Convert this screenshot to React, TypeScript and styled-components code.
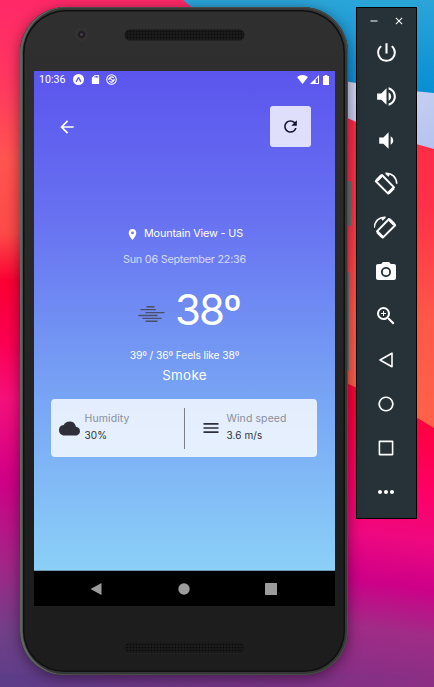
import React from 'react';
import styled, { createGlobalStyle } from 'styled-components';
import {
  MdArrowBack, MdRefresh, MdLocationOn, MdCloud, MdMenu, MdPowerSettingsNew, MdVolumeUp, MdVolumeDown,
  MdPhotoCamera, MdZoomIn, MdMoreHoriz, MdSdCard, MdRemove, MdClose,
} from 'react-icons/md';

const Global = createGlobalStyle`
  * { box-sizing: border-box; }
  body { margin: 0; overflow: hidden; font-family: Inter, "Open Sans", sans-serif; }
  svg { display: block; flex: none; }
`;

const Desktop = styled.main`
  position: relative;
  isolation: isolate;
  width: 434px;
  height: 687px;
  overflow: hidden;
  display: flex;
  align-items: flex-start;
  padding: 7px 0 0 20px;
`;

const WallpaperArt = styled.svg`
  position: absolute;
  inset: 0;
  z-index: -1;
`;

const Phone = styled.section`
  position: relative;
  width: 328px;
  height: 668px;
  padding: 0 13px 0 14px;
  display: flex;
  flex-direction: column;
  border-radius: 46px 46px 44px 44px;
  background: linear-gradient(#303030, #292929 35%, #1e1e1e 75%, #1d1d1d);
  box-shadow: inset 2.5px 0 0 0 #5f6562, inset -1px 0 0 0 #4a4c4b, inset 0 0 0 1px #484a49,
    inset 0 0 0 3px #363837, inset 0 0 0 4.5px #101010, 0 3px 14px rgba(20, 0, 20, 0.5);
`;

const SideKey = styled.i<{ $top: number; $h: number; $w: number }>`
  position: absolute;
  left: 328px;
  top: ${p => p.$top}px;
  width: ${p => p.$w}px;
  height: ${p => p.$h}px;
  border-radius: 0 1px 1px 0;
  background: #555b5b;
`;

const Bezel = styled.div<{ $h: number; $top: number }>`
  position: relative;
  height: ${p => p.$h}px;
  padding-top: ${p => p.$top}px;
  display: flex;
  justify-content: center;
  align-items: flex-start;
`;

const Grille = styled.div`
  width: 119px;
  height: 10px;
  border-radius: 5px;
  background: radial-gradient(circle, #0a0a0a 0.8px, transparent 1.1px) 1px 0 / 3px 3px, #1b1b1b;
  box-shadow: 0 0 0 0.5px #171717, 0 1px 0 #303030;
`;

const Camera = styled.i`
  position: absolute;
  left: 41px;
  top: 21px;
  width: 13px;
  height: 13px;
  border-radius: 50%;
  background: radial-gradient(circle, #443c49 0 1px, #1f1d21 2px 3px, #333 4.5px);
`;

const Screen = styled.div`
  height: 500px;
  display: flex;
  flex-direction: column;
  align-items: center;
  color: #fff;
  background: linear-gradient(#5b55ee, #6872f1 30%, #76a0f4 62%, #8bd0f8);
  border-bottom: 1px solid #7396ae;
`;

const StatusBar = styled.div`
  align-self: stretch;
  height: 17px;
  padding: 0 6px 0 5px;
  display: flex;
  align-items: center;
  font: 10.6px/17px Roboto, sans-serif;
  & > span { width: 34px; }
`;

const StatusIcons = styled.div<{ $gap: number; $push?: boolean }>`
  display: flex;
  align-items: center;
  gap: ${p => p.$gap}px;
  margin-left: ${p => (p.$push ? 'auto' : '0')};
  & > :last-child { margin-left: ${p => (p.$push ? '3px' : '0')}; }
`;

const Header = styled.header`
  align-self: stretch;
  display: flex;
  align-items: center;
  justify-content: space-between;
  margin: 18px 24px 0 23px;
`;

const RefreshButton = styled.button`
  width: 41px;
  height: 41px;
  padding: 0;
  border: 0;
  border-radius: 3px;
  display: grid;
  place-items: center;
  color: #15122b;
  background: rgba(255, 255, 255, 0.8);
`;

const Line = styled.div<{ $mt: number; $size: number; $lh: number; $track?: number; $fade?: number }>`
  display: flex;
  align-items: center;
  white-space: pre;
  margin-top: ${p => p.$mt}px;
  font-size: ${p => p.$size}px;
  line-height: ${p => p.$lh}px;
  letter-spacing: ${p => p.$track ?? 0}px;
  opacity: ${p => p.$fade ?? 1};
`;

const Place = styled(Line)`
  gap: 5px;
`;

const Temperature = styled.div`
  display: flex;
  align-items: center;
  gap: 10px;
  height: 40px;
  margin: 22px 0 0 9px;
  font-size: 42px;
  font-weight: 400;
  line-height: 40px;
  letter-spacing: -1.9px;
  & > svg { margin-top: 8px; }
`;

const Card = styled.section`
  width: 266px;
  height: 58px;
  margin: 15px 2px 0 0;
  display: grid;
  grid-template-columns: 133px 1px 132px;
  align-items: center;
  border-radius: 4px;
  background: rgba(255, 255, 255, 0.8);
  color: #2e2f38;
`;

const Metric = styled.div<{ $left: number; $gap: number }>`
  display: flex;
  align-items: center;
  gap: ${p => p.$gap}px;
  padding-left: ${p => p.$left}px;
`;

const MetricText = styled.dl`
  margin: -2px 0 0;
  font-size: 10.5px;
  line-height: 17px;
  letter-spacing: 0.1px;
  dt { color: #8b8e9b; }
  dd { margin: 0; font-size: 10px; }
`;

const Divider = styled.i`
  height: 41px;
  background: #7c808a;
`;

const NavBar = styled.nav`
  height: 35px;
  padding: 0 58px 0 56px;
  display: flex;
  align-items: center;
  justify-content: space-between;
  background: #000;
  color: #9c9c9c;
`;

const Toolbar = styled.aside`
  width: 61px;
  height: 512px;
  margin-left: 8px;
  padding-right: 1px;
  border: 1px solid #000;
  display: flex;
  flex-direction: column;
  align-items: center;
  color: #fff;
  background: #263238;
`;

const WindowControls = styled.div`
  height: 22px;
  padding-top: 4px;
  display: flex;
  align-items: center;
  gap: 13px;
`;

const Tool = styled.div`
  width: 44px;
  height: 44px;
  display: grid;
  place-items: center;
`;

const Tools = styled.div`
  display: flex;
  flex-direction: column;
`;

const Wallpaper = () => (
  <WallpaperArt width="434" height="687" viewBox="0 0 434 687" aria-hidden>
    <defs>
      <linearGradient id="left" x2="0" y2="1">
        <stop offset="0" stopColor="#ff2868" />
        <stop offset="0.12" stopColor="#ff3860" />
        <stop offset="0.23" stopColor="#ff5450" />
        <stop offset="0.34" stopColor="#fc4a48" />
        <stop offset="0.41" stopColor="#fb0034" />
        <stop offset="0.5" stopColor="#fb0052" />
        <stop offset="0.58" stopColor="#f5107a" />
        <stop offset="0.7" stopColor="#d00086" />
        <stop offset="0.82" stopColor="#a32588" />
        <stop offset="0.92" stopColor="#704088" />
        <stop offset="1" stopColor="#5c3d88" />
      </linearGradient>
      <linearGradient id="right" gradientUnits="userSpaceOnUse" x1="0" y1="120" x2="0" y2="687">
        <stop offset="0" stopColor="#ff2a48" />
        <stop offset="0.15" stopColor="#ff3048" />
        <stop offset="0.35" stopColor="#ff5848" />
        <stop offset="0.5" stopColor="#ff6048" />
      </linearGradient>
      <linearGradient id="lower" gradientUnits="userSpaceOnUse" x1="370" y1="400" x2="330" y2="687">
        <stop offset="0" stopColor="#ff0038" />
        <stop offset="0.28" stopColor="#ff0064" />
        <stop offset="0.46" stopColor="#ee0880" />
        <stop offset="0.62" stopColor="#cd0088" />
        <stop offset="0.78" stopColor="#a02c87" />
        <stop offset="1" stopColor="#803084" />
      </linearGradient>
      <linearGradient id="sky" x2="0" y2="1">
        <stop offset="0" stopColor="#2ba5d8" />
        <stop offset="1" stopColor="#078ed4" />
      </linearGradient>
      <linearGradient id="band" x2="1" y2="1">
        <stop offset="0" stopColor="#d9def5" />
        <stop offset="1" stopColor="#b4c2ee" />
      </linearGradient>
      <linearGradient id="floor">
        <stop offset="0" stopColor="#5c3d88" />
        <stop offset="1" stopColor="#8c2e84" />
      </linearGradient>
    </defs>
    <rect width="220" height="687" fill="url(#left)" />
    <rect x="220" width="214" height="687" fill="url(#right)" />
    <path d="M183 0H434V94L348 82Q250 60 183 0Z" fill="url(#sky)" />
    <path d="M320 76Q380 89 434 93V149Q390 138 345 117Z" fill="url(#band)" />
    <path d="M300 365Q380 394 434 428V687H220V400Z" fill="url(#lower)" />
    <rect y="674" width="434" height="13" fill="url(#floor)" />
  </WallpaperArt>
);

const AppBadge = () => (
  <svg width="11" height="11" viewBox="0 0 12 12">
    <circle cx="6" cy="6" r="6" fill="#fff" />
    <path d="M3.4 8.6L5.7 4.2Q6 3.6 6.3 4.2L8.6 8.6" fill="none" stroke="#5d58ee" strokeWidth="1.4" />
  </svg>
);

const SyncBadge = () => (
  <svg width="11" height="11" viewBox="0 0 12 12" fill="none" stroke="#fff">
    <circle cx="6" cy="6" r="5.2" strokeWidth="1.1" />
    <path d="M3 6.6C3 3 7 2.2 8.3 4.4M9 5.5C9 9 5 9.8 3.7 7.6M3.8 4.2L8.3 8" strokeWidth="1.3" />
  </svg>
);

const Wifi = () => (
  <svg width="11" height="9" viewBox="0 0 11 9"><path d="M0 2Q5.5-2 11 2L5.5 9Z" fill="#fff" /></svg>
);

const Signal = () => (
  <svg width="9" height="9" viewBox="0 0 9 9">
    <path d="M9 0V9H0Z" fill="#fff" /><path d="M5.7 4.6L8 2.3V8H5.7Z" fill="#5b56ee" />
  </svg>
);

const Battery = () => (
  <svg width="6" height="10" viewBox="0 0 6 10"><path d="M1.8 0H4.2V1H6V10H0V1H1.8Z" fill="#fff" /></svg>
);

const Smoke = () => (
  <svg width="27" height="18" viewBox="0 0 27 18" strokeWidth="1.4" stroke="#4b4f67" strokeLinecap="round">
    <path d="M9 1.7H16M3 4.6H17.5M8 7.6H26M1 10.5H19M5 13.4H23M8 16.3H19" />
  </svg>
);

/* A tilted handset with an arc over one shoulder; mirrored for the opposite turn. */
const Rotate = ({ left = false }: { left?: boolean }) => (
  <svg width="24" height="24" viewBox="0 0 24 24" fill="none" stroke="#fff">
    <g transform={left ? 'translate(23 0) scale(-1 1)' : undefined}>
      <path d="M8 3L20 15.4 14.2 21.6 1.8 9.2Z" strokeWidth="2" strokeLinejoin="round" />
      <path d="M2.6 8.6L7.6 3.6M14.6 21L19.6 16" strokeWidth="3" />
      <path d="M11.4 1.4C18 0.9 22.4 5 22.8 11.8M12 1.4L15 4.2" strokeWidth="1.6" />
    </g>
  </svg>
);

const Shape = ({ d }: { d: string }) => (
  <svg width="18" height="18" viewBox="0 0 18 18" fill="none" stroke="#fff" strokeWidth="1.6" strokeLinejoin="round">
    <path d={d} />
  </svg>
);

const tools = [
  <MdPowerSettingsNew size={25} />,
  <MdVolumeUp size={25} />,
  <MdVolumeDown size={25} />,
  <Rotate />,
  <Rotate left />,
  <MdPhotoCamera size={24} />,
  <MdZoomIn size={24} />,
  <Shape d="M15 2.2V15.8L3 9Z" />,
  <Shape d="M9 2.2A6.8 6.8 0 1 1 8.99 2.2Z" />,
  <Shape d="M2.4 2.4H15.6V15.6H2.4Z" />,
  <MdMoreHoriz size={24} />,
];

export default function App() {
  return (
    <>
      <Global />
      <Desktop>
        <Wallpaper />
        <Phone>
          <SideKey $top={174} $h={45} $w={3} />
          <SideKey $top={265} $h={99} $w={1} />
          <Bezel $h={64} $top={23}>
            <Camera />
            <Grille />
          </Bezel>
          <Screen>
            <StatusBar>
              <span>10:36</span>
              <StatusIcons $gap={5.5}>
                <AppBadge />
                <MdSdCard size={11} />
                <SyncBadge />
              </StatusIcons>
              <StatusIcons $gap={1.5} $push>
                <Wifi />
                <Signal />
                <Battery />
              </StatusIcons>
            </StatusBar>
            <Header>
              <MdArrowBack size={20} />
              <RefreshButton aria-label="Refresh"><MdRefresh size={19} /></RefreshButton>
            </Header>
            <Place $mt={79} $size={10.8} $lh={16} $track={-0.15}>
              <MdLocationOn size={13} />
              <span>Mountain View - US</span>
            </Place>
            <Line $mt={10} $size={10.8} $lh={16} $track={-0.22} $fade={0.7}>Sun 06 September 22:36</Line>
            <Temperature>
              <Smoke />
              <span>38º</span>
            </Temperature>
            <Line $mt={17} $size={10.3} $lh={16} $track={-0.12}>39º / 36º Feels like 38º</Line>
            <Line $mt={3} $size={13.4} $lh={18} $track={0.3}>Smoke</Line>
            <Card>
              <Metric $left={8} $gap={5}>
                <MdCloud size={21} />
                <MetricText><dt>Humidity</dt><dd>30%</dd></MetricText>
              </Metric>
              <Divider />
              <Metric $left={16} $gap={6}>
                <MdMenu size={20} />
                <MetricText><dt>Wind speed</dt><dd>3.6 m/s</dd></MetricText>
              </Metric>
            </Card>
          </Screen>
          <NavBar>
            <svg width="12" height="12" viewBox="0 0 12 12"><path d="M11.5 0V12L0.5 6Z" fill="currentColor" /></svg>
            <svg width="12" height="12" viewBox="0 0 12 12"><circle cx="6" cy="6" r="5.7" fill="currentColor" /></svg>
            <svg width="12" height="12" viewBox="0 0 12 12"><rect width="12" height="12" rx="0.6" fill="currentColor" /></svg>
          </NavBar>
          <Bezel $h={69} $top={37}>
            <Grille />
          </Bezel>
        </Phone>
        <Toolbar>
          <WindowControls>
            <MdRemove size={12} />
            <MdClose size={12} />
          </WindowControls>
          <Tools>
            {tools.map((icon, i) => <Tool key={i}>{icon}</Tool>)}
          </Tools>
        </Toolbar>
      </Desktop>
    </>
  );
}
